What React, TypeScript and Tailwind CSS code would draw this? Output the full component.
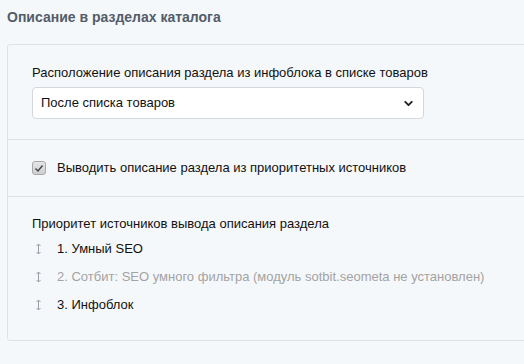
import { ChevronDown } from 'lucide-react';

const sources = [
  { text: '1. Умный SEO', muted: false },
  { text: '2. Сотбит: SEO умного фильтра (модуль sotbit.seometa не установлен)', muted: true },
  { text: '3. Инфоблок', muted: false },
];

const SortIcon = ({ className }: { className?: string }) => (
  <svg width="7" height="12" viewBox="0 0 7 12" className={className} fill="none" stroke="currentColor" strokeWidth="1">
    <path d="M3.5 1v10" />
    <path d="M1.5 3l2-2 2 2" />
    <path d="M1.5 9l2 2 2-2" />
  </svg>
);

export default function App() {
  return (
    <div className="w-[524px] h-[364px] overflow-hidden bg-[#f5f8fa] font-['Liberation_Sans',Arial,sans-serif] text-[13px] text-[#111]">
      <h2 className="pl-[7px] pt-[9px] h-[44px] text-[14px] font-bold text-[#535c69] leading-[17px]">
        Описание в разделах каталога
      </h2>

      <div className="ml-[7px] w-[540px] border border-[#dfe3e8] rounded-[3px] bg-[#f5f8fa]">
        {/* Location of the description */}
        <div className="h-[95px] px-[24px] pt-[20px] border-b border-[#dfe3e8]">
          <div className="leading-[16px]">Расположение описания раздела из инфоблока в списке товаров</div>
          <div className="mt-[6px] w-[392px] h-[32px] rounded-[4px] border border-[#d3d8de] bg-white flex items-center justify-between pl-[8px] pr-[8px]">
            <span>После списка товаров</span>
            <ChevronDown size={13} strokeWidth={3.5} className="text-[#222]" />
          </div>
        </div>

        {/* Priority checkbox */}
        <div className="h-[57px] px-[24px] flex items-center gap-[11px] border-b border-[#dfe3e8]">
          <div className="w-[14px] h-[14px] rounded-[3px] border border-[#a8a8a8] bg-gradient-to-b from-[#e6e6e6] to-[#cfcfcf] flex items-center justify-center">
            <svg width="10" height="9" viewBox="0 0 10 9" fill="none" stroke="#444" strokeWidth="1.4">
              <path d="M1.5 4.5l2.5 2.5 4.5-5.5" />
            </svg>
          </div>
          <span>Выводить описание раздела из приоритетных источников</span>
        </div>

        {/* Source priority */}
        <div className="h-[143px] px-[24px] pt-[19px]">
          <div className="leading-[16px]">Приоритет источников вывода описания раздела</div>
          <ul className="mt-[3px] flex flex-col">
            {sources.map((s) => (
              <li key={s.text} className="h-[28px] flex items-center">
                <SortIcon className="ml-[3px] text-[#9aa0a6]" />
                <span className={`ml-[15px] ${s.muted ? 'text-[#a3a3a3]' : ''}`}>{s.text}</span>
              </li>
            ))}
          </ul>
        </div>
      </div>
    </div>
  );
}
